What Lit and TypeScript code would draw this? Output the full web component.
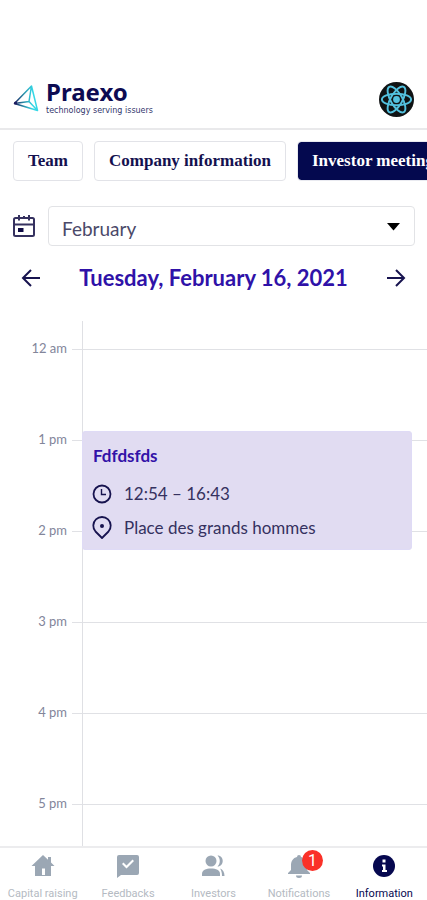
import { LitElement, html, css, svg } from "lit";
import { customElement, property, state } from "lit/decorators.js";
import { classMap } from "lit/directives/class-map.js";

const icons: Record<string, unknown> = {
  home: svg`<path fill-rule="evenodd" d="M12 1 0.500 12H4v10h16V12h3.500L20 8.500V3h-3v2.700zM11 14.500h3V21h-3z"/>`,
  feedback: svg`<path fill-rule="evenodd" d="M3 1h18a2 2 0 0 1 2 2v16a2 2 0 0 1-2 2H5l-4 3V3a2 2 0 0 1 2-2zm4.500 7.500-1.500 1.500 4.500 4.500 7.500-7.500L16.500 5.500l-6 6z"/>`,
  people: svg`<circle cx="10" cy="7" r="5.500"/><path d="M1 22v-2c0-4 4-5.500 9-5.500s9 1.500 9 5.500v2z"/><path d="M16.500 1.500c7 0 7 11 0 11 3-3 3-8 0-11zM19 14.500c3 1 4.500 4 4.500 7.500H21c0-3-.5-5.500-2-7.500z"/>`,
  bell: svg`<path d="M12 1a2 2 0 0 0-2 2C6 4 4 7 4 11v5l-3 3v1h22v-1l-3-3v-5c0-4-2-7-6-8a2 2 0 0 0-2-2zM9 21.500h6a3 2.500 0 0 1-6 0z"/>`,
  info: svg`<circle cx="12" cy="12" r="11"/><path fill="#fff" d="M10.500 5.500h3v3h-3zM10 10.500h3.500V16H15v2h-5v-2h1v-3.500h-1z"/>`,
};

@customElement("app-header")
class AppHeader extends LitElement {
  static styles = css`
    :host {
      display: flex;
      align-items: center;
      justify-content: space-between;
      height: 58px;
      padding: 0 13px;
      border-bottom: 2px solid #e9e9eb;
    }
    .brand {
      display: flex;
      align-items: center;
      gap: 7px;
      text-decoration: none;
      color: #0d0b52;
    }
    .words {
      display: flex;
      flex-direction: column;
      padding-bottom: 4px;
    }
    .name {
      font: 700 24px/28px "Noto Sans", sans-serif;
    }
    .tagline {
      font: 8px/10px "DejaVu Sans", sans-serif;
      color: #34376d;
    }
    .profile {
      padding: 0;
      border: 0;
      background: none;
      border-radius: 50%;
      cursor: pointer;
    }
    svg {
      display: block;
    }
  `;
  render() {
    return html`
      <a class="brand" href="#">
        <svg width="26" height="28" viewBox="0 0 26 28" fill="none" stroke-linejoin="round" stroke-width="1.500" aria-hidden="true">
          <defs>
            <linearGradient id="edge" x1="0" y1="0" x2="1" y2="0">
              <stop offset="0" stop-color="#1b1b5e" />
              <stop offset="0.400" stop-color="#2a8fa8" />
              <stop offset="0.800" stop-color="#35d8e6" />
            </linearGradient>
          </defs>
          <path stroke="url(#edge)" d="M1.500 18.500 18.500 1l6 24.500zM18.500 1 16 16.500l8.500 9M16 16.500 1.500 18.500" />
          <circle cx="2.500" cy="18" r="1.500" fill="#1b1b5e" />
        </svg>
        <span class="words">
          <span class="name">Praexo</span>
          <span class="tagline">technology serving issuers</span>
        </span>
      </a>
      <button class="profile" aria-label="Profile">
        <svg width="35" height="35" viewBox="0 0 36 36" fill="none" stroke="#53c1de" stroke-width="2">
          <circle cx="18" cy="18" r="18" fill="#101314" stroke="none" />
          <ellipse cx="18" cy="18" rx="15" ry="6" />
          <ellipse cx="18" cy="18" rx="15" ry="6" transform="rotate(60 18 18)" />
          <ellipse cx="18" cy="18" rx="15" ry="6" transform="rotate(120 18 18)" />
          <circle cx="18" cy="18" r="3.500" fill="#53c1de" stroke="none" />
        </svg>
      </button>
    `;
  }
}

@customElement("day-calendar")
class DayCalendar extends LitElement {
  @property({ attribute: false }) hours: string[] = [];
  static styles = css`
    :host {
      display: block;
      position: relative;
      padding-top: 18px;
    }
    .axis {
      position: absolute;
      top: 0;
      bottom: 0;
      left: 82px;
      border-left: 1px solid #dfe0e4;
    }
    .hours {
      display: flex;
      flex-direction: column;
      gap: 71px;
      margin: 0;
      padding: 0;
      list-style: none;
    }
    .hour {
      display: grid;
      grid-template-columns: 67px 1fr;
      gap: 5px;
      align-items: center;
      font-size: 13px;
      line-height: 18px;
      color: #82859a;
      text-align: right;
    }
    .label {
      padding-bottom: 2px;
    }
    .line {
      border-top: 1px solid #e0e1e5;
    }
    .event {
      position: absolute;
      top: 110px;
      left: 82px;
      right: 15px;
      box-sizing: border-box;
      height: 119px;
      padding: 14px 10px;
      border: 1px solid #dfdbf6;
      border-radius: 3px;
      background: #e1dcf2;
      color: #35315f;
      font-size: 17px;
      line-height: 20px;
    }
    .title {
      margin: 0 0 16px;
      font-size: 17px;
      line-height: 20px;
      font-weight: 700;
      color: #3212a8;
    }
    .detail {
      display: flex;
      align-items: center;
      gap: 12px;
      height: 24px;
      margin: 0 0 10px;
    }
    .detail svg {
      margin-left: -1px;
    }
  `;
  render() {
    return html`
      <div class="axis"></div>
      <ol class="hours">
        ${this.hours.map((h) => html`<li class="hour"><span class="label">${h}</span><span class="line"></span></li>`)}
      </ol>
      <article class="event">
        <h2 class="title">Fdfdsfds</h2>
        <p class="detail">
          <svg width="20" height="20" viewBox="0 0 20 20" fill="none" stroke="#17134f" stroke-width="1.800" aria-hidden="true">
            <circle cx="10" cy="10" r="8.500" />
            <path stroke-width="1.400" d="M9.500 5v5.500H14" />
          </svg>
          12:54 – 16:43
        </p>
        <p class="detail">
          <svg width="20" height="24" viewBox="0 0 20 24" fill="none" stroke="#17134f" stroke-width="1.800" stroke-linejoin="round" aria-hidden="true">
            <path d="M10 22 3.500 15.500a8.700 8.700 0 1 1 13 0z" />
            <circle cx="10" cy="10" r="2" fill="#17134f" stroke="none" />
          </svg>
          Place des grands hommes
        </p>
      </article>
    `;
  }
}

@customElement("tab-bar")
class TabBar extends LitElement {
  private items = [
    { icon: "home", label: "Capital raising" },
    { icon: "feedback", label: "Feedbacks" },
    { icon: "people", label: "Investors" },
    { icon: "bell", label: "Notifications", badge: 1 },
    { icon: "info", label: "Information", active: true },
  ];
  static styles = css`
    :host {
      display: block;
      border-top: 2px solid #ececee;
      background: #fff;
    }
    .bar {
      display: grid;
      grid-template-columns: repeat(5, 1fr);
      height: 52px;
    }
    .item {
      display: flex;
      flex-direction: column;
      align-items: center;
      gap: 9px;
      padding-top: 6px;
      font: 11px/14px Roboto, sans-serif;
      color: #b4bac2;
      text-decoration: none;
      white-space: nowrap;
    }
    .icon {
      position: relative;
      color: #9ba7b4;
    }
    .active,
    .active .icon {
      color: #06084f;
    }
    svg {
      display: block;
    }
    .badge {
      position: absolute;
      top: -4px;
      left: 15px;
      width: 21px;
      height: 21px;
      border-radius: 50%;
      background: #fa3128;
      color: #fff;
      font-size: 16px;
      line-height: 21px;
      text-align: center;
    }
  `;
  render() {
    return html`
      <nav class="bar" aria-label="Main">
        ${this.items.map(
          (i) => html`<a href="#" class=${classMap({ item: true, active: !!i.active })}>
            <span class="icon">
              <svg width="24" height="24" viewBox="0 0 24 24" fill="currentColor" aria-hidden="true">${icons[i.icon]}</svg>
              ${i.badge ? html`<span class="badge">${i.badge}</span>` : ""}
            </span>
            <span>${i.label}</span>
          </a>`
        )}
      </nav>
    `;
  }
}

@customElement("app-root")
class AppRoot extends LitElement {
  @state() private tab = "Investor meetings";
  private tabs = ["Team", "Company information", "Investor meetings"];
  private hours = ["12 am", "1 pm", "2 pm", "3 pm", "4 pm", "5 pm"];

  static styles = css`
    :host {
      display: flex;
      flex-direction: column;
      box-sizing: border-box;
      min-height: 100vh;
      padding-top: 70px;
      overflow: hidden;
      background: #fff;
      font-family: Lato, sans-serif;
    }
    .tabs {
      display: flex;
      gap: 11px;
      padding: 11px 13px;
      overflow: hidden;
    }
    .tab {
      flex: none;
      height: 40px;
      padding: 0 14px;
      border: 1px solid #e2e3e8;
      border-radius: 4px;
      background: #fff;
      color: #14114f;
      font: 700 17px/20px "Liberation Serif", serif;
      cursor: pointer;
    }
    .selected {
      border-color: #e9eaf0;
      background: #04094f;
      background-clip: padding-box;
      color: #fff;
    }
    .month {
      display: flex;
      align-items: center;
      gap: 12px;
      padding: 14px 12px 0;
    }
    .field {
      flex: 1;
      position: relative;
    }
    .select {
      appearance: none;
      display: block;
      width: 100%;
      height: 40px;
      padding: 5px 13px 0;
      border: 1px solid #e2e3e6;
      border-radius: 4px;
      background: #fff;
      color: #4b4969;
      font: 19px/24px Lato, sans-serif;
    }
    .caret {
      position: absolute;
      top: 17px;
      right: 15px;
      pointer-events: none;
    }
    .day {
      display: flex;
      align-items: center;
      justify-content: space-between;
      padding: 16px 20px 27px;
    }
    .date {
      margin: 0;
      font-size: 22px;
      line-height: 32px;
      font-weight: 700;
      color: #2f12a8;
      white-space: nowrap;
    }
    .arrow {
      padding: 0;
      border: 0;
      background: none;
      cursor: pointer;
    }
    svg {
      display: block;
    }
    .calendar {
      flex: 1;
    }
  `;

  render() {
    return html`
      <app-header></app-header>
      <div class="tabs">
        ${this.tabs.map(
          (t) => html`<button
            class=${classMap({ tab: true, selected: t === this.tab })}
            @click=${() => (this.tab = t)}
          >${t}</button>`
        )}
      </div>
      <div class="month">
        <svg width="24" height="24" viewBox="0 0 24 24" fill="none" stroke="#35315f" stroke-width="2" aria-hidden="true">
          <rect x="2" y="4" width="20" height="18" rx="1.500" />
          <path d="M2 10.500h20M7 1v5.500M17 1v5.500M12 2v2" />
          <path fill="#100c45" stroke="none" d="M6 14h5.500v4H6z" />
        </svg>
        <div class="field">
          <select class="select" aria-label="Month">
            <option>February</option>
          </select>
          <svg class="caret" width="13" height="8" viewBox="0 0 13 8" aria-hidden="true"><path d="M0 0h13L6.500 7.500z" /></svg>
        </div>
      </div>
      <div class="day">
        <button class="arrow" aria-label="Previous day">
          <svg width="22" height="22" viewBox="0 0 22 22" fill="none" stroke="#17134f" stroke-width="2"><path d="M20 11H3M11 3l-8 8 8 8" /></svg>
        </button>
        <h1 class="date">Tuesday, February 16, 2021</h1>
        <button class="arrow" aria-label="Next day">
          <svg width="22" height="22" viewBox="0 0 22 22" fill="none" stroke="#17134f" stroke-width="2"><path d="M2 11h17M11 3l8 8-8 8" /></svg>
        </button>
      </div>
      <day-calendar class="calendar" .hours=${this.hours}></day-calendar>
      <tab-bar></tab-bar>
    `;
  }
}
